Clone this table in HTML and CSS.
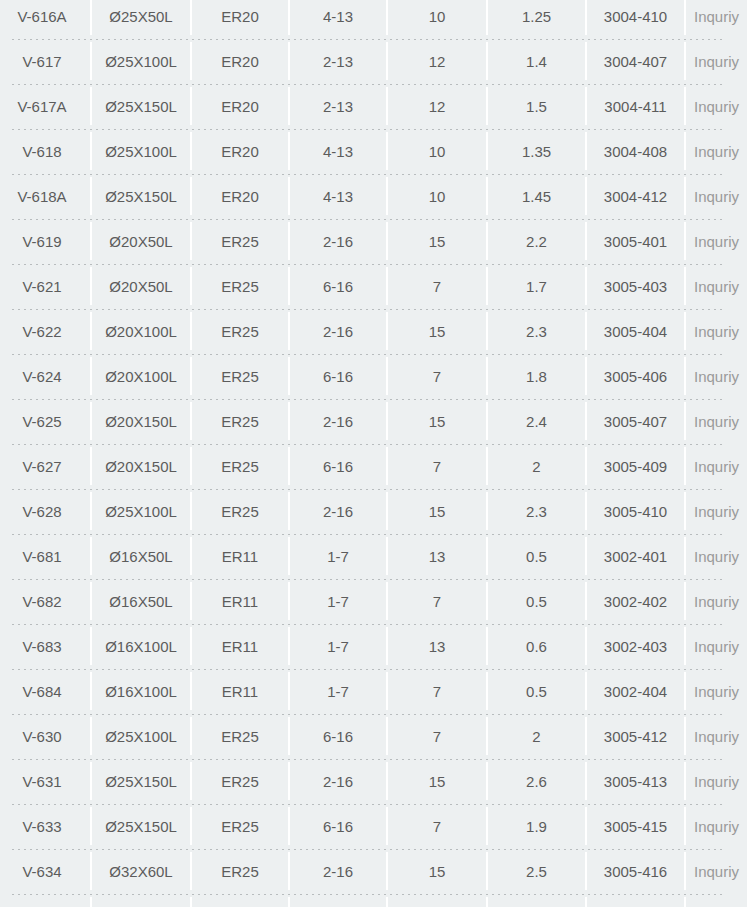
FILE: index.html
```html
<!DOCTYPE html>
<html lang="en">
<head>
<meta charset="utf-8">
<title>Products</title>
<link rel="stylesheet" href="styles.css">
</head>
<body>
<div class="table">
  <div class="row"><div class="cells"><div class="c w1">V-616A</div><div class="c w2">Ø25X50L</div><div class="c w3">ER20</div><div class="c w4">4-13</div><div class="c w5">10</div><div class="c w6">1.25</div><div class="c w7">3004-410</div><div class="c link">Inquriy</div></div><div class="sep"></div></div>
  <div class="row"><div class="cells"><div class="c w1">V-617</div><div class="c w2">Ø25X100L</div><div class="c w3">ER20</div><div class="c w4">2-13</div><div class="c w5">12</div><div class="c w6">1.4</div><div class="c w7">3004-407</div><div class="c link">Inquriy</div></div><div class="sep"></div></div>
  <div class="row"><div class="cells"><div class="c w1">V-617A</div><div class="c w2">Ø25X150L</div><div class="c w3">ER20</div><div class="c w4">2-13</div><div class="c w5">12</div><div class="c w6">1.5</div><div class="c w7">3004-411</div><div class="c link">Inquriy</div></div><div class="sep"></div></div>
  <div class="row"><div class="cells"><div class="c w1">V-618</div><div class="c w2">Ø25X100L</div><div class="c w3">ER20</div><div class="c w4">4-13</div><div class="c w5">10</div><div class="c w6">1.35</div><div class="c w7">3004-408</div><div class="c link">Inquriy</div></div><div class="sep"></div></div>
  <div class="row"><div class="cells"><div class="c w1">V-618A</div><div class="c w2">Ø25X150L</div><div class="c w3">ER20</div><div class="c w4">4-13</div><div class="c w5">10</div><div class="c w6">1.45</div><div class="c w7">3004-412</div><div class="c link">Inquriy</div></div><div class="sep"></div></div>
  <div class="row"><div class="cells"><div class="c w1">V-619</div><div class="c w2">Ø20X50L</div><div class="c w3">ER25</div><div class="c w4">2-16</div><div class="c w5">15</div><div class="c w6">2.2</div><div class="c w7">3005-401</div><div class="c link">Inquriy</div></div><div class="sep"></div></div>
  <div class="row"><div class="cells"><div class="c w1">V-621</div><div class="c w2">Ø20X50L</div><div class="c w3">ER25</div><div class="c w4">6-16</div><div class="c w5">7</div><div class="c w6">1.7</div><div class="c w7">3005-403</div><div class="c link">Inquriy</div></div><div class="sep"></div></div>
  <div class="row"><div class="cells"><div class="c w1">V-622</div><div class="c w2">Ø20X100L</div><div class="c w3">ER25</div><div class="c w4">2-16</div><div class="c w5">15</div><div class="c w6">2.3</div><div class="c w7">3005-404</div><div class="c link">Inquriy</div></div><div class="sep"></div></div>
  <div class="row"><div class="cells"><div class="c w1">V-624</div><div class="c w2">Ø20X100L</div><div class="c w3">ER25</div><div class="c w4">6-16</div><div class="c w5">7</div><div class="c w6">1.8</div><div class="c w7">3005-406</div><div class="c link">Inquriy</div></div><div class="sep"></div></div>
  <div class="row"><div class="cells"><div class="c w1">V-625</div><div class="c w2">Ø20X150L</div><div class="c w3">ER25</div><div class="c w4">2-16</div><div class="c w5">15</div><div class="c w6">2.4</div><div class="c w7">3005-407</div><div class="c link">Inquriy</div></div><div class="sep"></div></div>
  <div class="row"><div class="cells"><div class="c w1">V-627</div><div class="c w2">Ø20X150L</div><div class="c w3">ER25</div><div class="c w4">6-16</div><div class="c w5">7</div><div class="c w6">2</div><div class="c w7">3005-409</div><div class="c link">Inquriy</div></div><div class="sep"></div></div>
  <div class="row"><div class="cells"><div class="c w1">V-628</div><div class="c w2">Ø25X100L</div><div class="c w3">ER25</div><div class="c w4">2-16</div><div class="c w5">15</div><div class="c w6">2.3</div><div class="c w7">3005-410</div><div class="c link">Inquriy</div></div><div class="sep"></div></div>
  <div class="row"><div class="cells"><div class="c w1">V-681</div><div class="c w2">Ø16X50L</div><div class="c w3">ER11</div><div class="c w4">1-7</div><div class="c w5">13</div><div class="c w6">0.5</div><div class="c w7">3002-401</div><div class="c link">Inquriy</div></div><div class="sep"></div></div>
  <div class="row"><div class="cells"><div class="c w1">V-682</div><div class="c w2">Ø16X50L</div><div class="c w3">ER11</div><div class="c w4">1-7</div><div class="c w5">7</div><div class="c w6">0.5</div><div class="c w7">3002-402</div><div class="c link">Inquriy</div></div><div class="sep"></div></div>
  <div class="row"><div class="cells"><div class="c w1">V-683</div><div class="c w2">Ø16X100L</div><div class="c w3">ER11</div><div class="c w4">1-7</div><div class="c w5">13</div><div class="c w6">0.6</div><div class="c w7">3002-403</div><div class="c link">Inquriy</div></div><div class="sep"></div></div>
  <div class="row"><div class="cells"><div class="c w1">V-684</div><div class="c w2">Ø16X100L</div><div class="c w3">ER11</div><div class="c w4">1-7</div><div class="c w5">7</div><div class="c w6">0.5</div><div class="c w7">3002-404</div><div class="c link">Inquriy</div></div><div class="sep"></div></div>
  <div class="row"><div class="cells"><div class="c w1">V-630</div><div class="c w2">Ø25X100L</div><div class="c w3">ER25</div><div class="c w4">6-16</div><div class="c w5">7</div><div class="c w6">2</div><div class="c w7">3005-412</div><div class="c link">Inquriy</div></div><div class="sep"></div></div>
  <div class="row"><div class="cells"><div class="c w1">V-631</div><div class="c w2">Ø25X150L</div><div class="c w3">ER25</div><div class="c w4">2-16</div><div class="c w5">15</div><div class="c w6">2.6</div><div class="c w7">3005-413</div><div class="c link">Inquriy</div></div><div class="sep"></div></div>
  <div class="row"><div class="cells"><div class="c w1">V-633</div><div class="c w2">Ø25X150L</div><div class="c w3">ER25</div><div class="c w4">6-16</div><div class="c w5">7</div><div class="c w6">1.9</div><div class="c w7">3005-415</div><div class="c link">Inquriy</div></div><div class="sep"></div></div>
  <div class="row"><div class="cells"><div class="c w1">V-634</div><div class="c w2">Ø32X60L</div><div class="c w3">ER25</div><div class="c w4">2-16</div><div class="c w5">15</div><div class="c w6">2.5</div><div class="c w7">3005-416</div><div class="c link">Inquriy</div></div><div class="sep"></div></div>
  <div class="row"><div class="cells"><div class="c w1"></div><div class="c w2"></div><div class="c w3"></div><div class="c w4"></div><div class="c w5"></div><div class="c w6"></div><div class="c w7"></div><div class="c link"></div></div></div>
</div>
</body>
</html>
```

FILE: styles.css
```css
html, body {
  margin: 0;
  padding: 0;
  background: #edf0f1;
  overflow: hidden;
}

.table {
  margin: -5px 0 0 -6px;
  width: 860px;
  font-family: "Liberation Sans", Arial, sans-serif;
  font-size: 15px;
  color: #5c5c5c;
}

.row {
  height: 45px;
  display: flex;
  flex-direction: column;
}

.cells {
  display: flex;
  margin-top: 2px;
  height: 38px;
}

.c {
  box-sizing: border-box;
  height: 38px;
  display: flex;
  align-items: center;
  justify-content: center;
  border-right: 2px solid #ffffff;
  flex: none;
  white-space: nowrap;
}

.w1 { width: 98px; }
.w2 { width: 100px; }
.w3 { width: 98px; }
.w4 { width: 98px; }
.w5 { width: 100px; }
.w6 { width: 99px; }
.w7 { width: 99px; }

.link {
  width: 99px;
  justify-content: flex-start;
  padding-left: 8px;
  color: #9a9a9a;
}

.sep {
  margin: 4px 0 0 18px;
  width: 714px;
  height: 2px;
  background: repeating-linear-gradient(to right, #b8bcbe 0 2px, transparent 2px 6px);
}
```
